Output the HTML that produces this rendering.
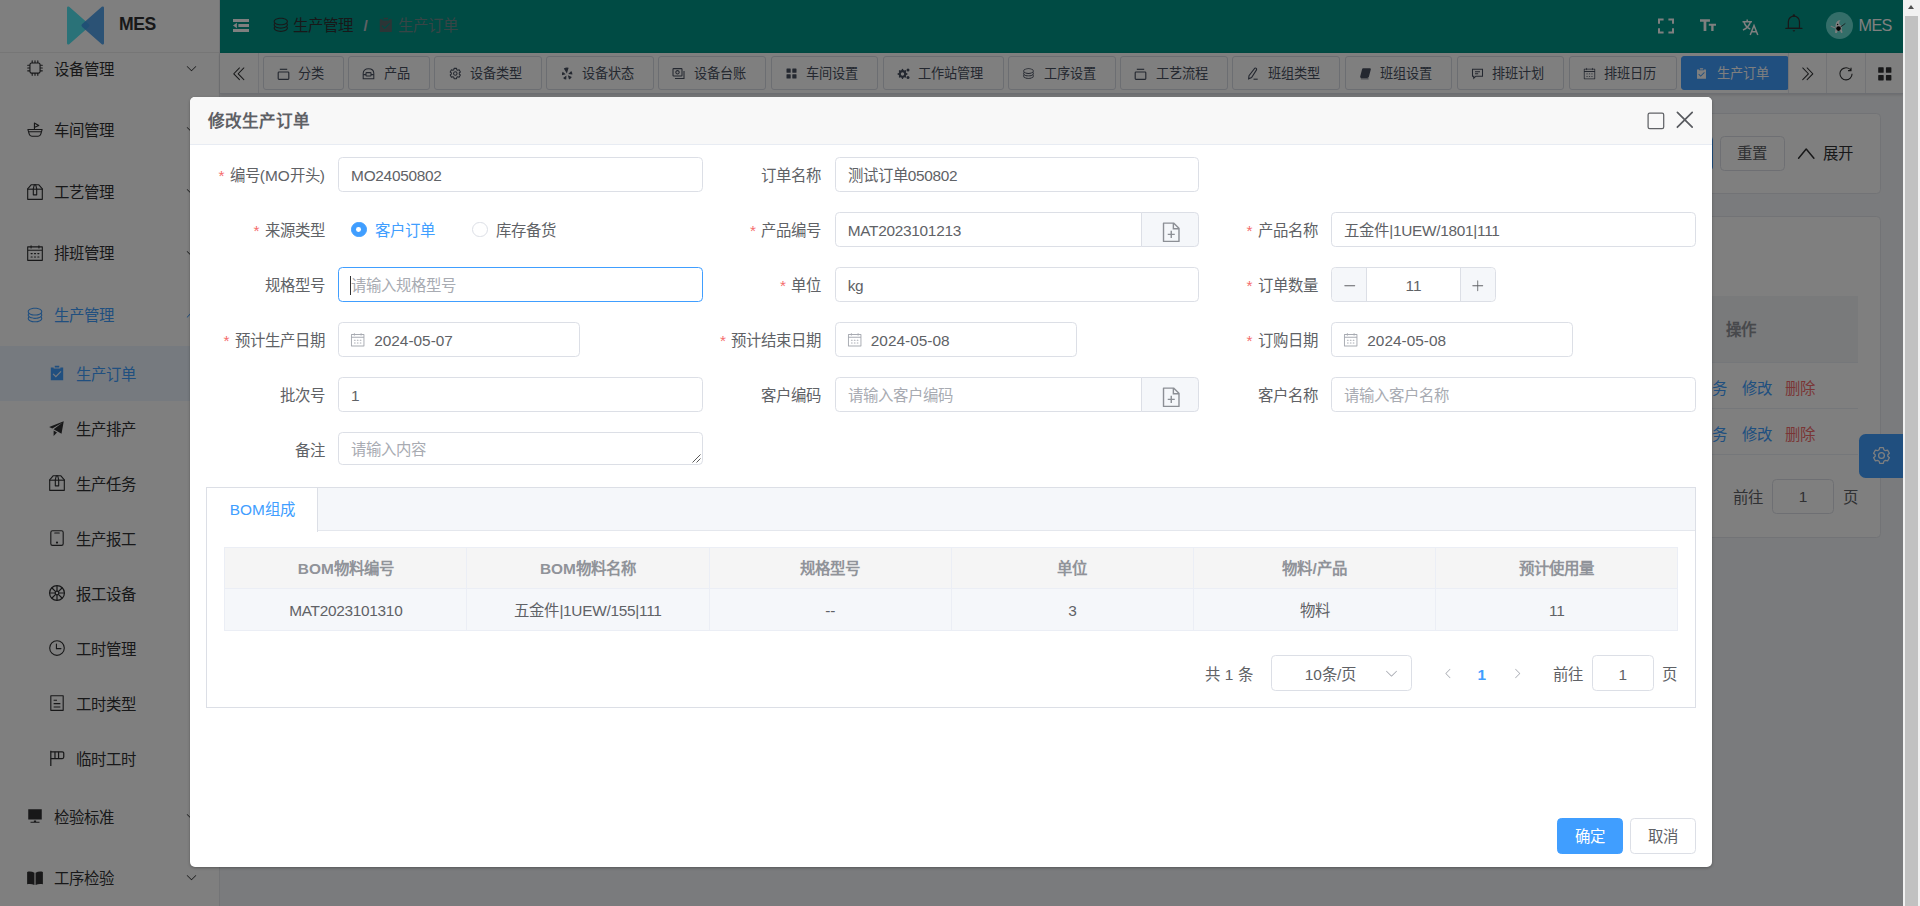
<!DOCTYPE html>
<html lang="zh-CN">
<head>
<meta charset="utf-8">
<title>MES</title>
<style>
*{box-sizing:border-box;}
html,body{margin:0;padding:0;}
body{width:1920px;height:906px;overflow:hidden;position:relative;background:#f5f7fa;font-family:"Liberation Sans",sans-serif;font-size:15.4px;color:#303133;}
svg{display:block;}
.abs{position:absolute;}
/* ---------- app ---------- */
#app{isolation:isolate;position:absolute;left:0;top:0;width:1903px;height:906px;overflow:hidden;background:#f5f7fa;}
#side{position:absolute;left:0;top:0;width:220px;height:906px;background:#fff;border-right:1px solid #e6e8ec;overflow:hidden;}
#logo{position:absolute;left:0;top:0;width:220px;height:53px;background:#fff;border-bottom:1px solid #ededed;z-index:2;}
#logo .t{position:absolute;left:119px;top:13px;font-size:17.6px;font-weight:bold;color:#303133;line-height:22px;letter-spacing:-0.4px;}
#menu{position:absolute;left:0;top:37.7px;width:219px;}
.mi{position:relative;height:61.6px;line-height:61.6px;font-size:15.4px;color:#303133;white-space:nowrap;}
.mi .ic{position:absolute;left:26.1px;top:21.8px;width:18px;height:18px;}
.mi .tx{position:absolute;left:54.3px;top:1px;}
.mi .ar{position:absolute;left:185px;top:24.2px;width:13px;height:13px;}
.smi{position:relative;height:55px;line-height:55px;font-size:15.4px;color:#303133;white-space:nowrap;}
.smi .ic{position:absolute;left:48px;top:18.5px;width:18px;height:18px;}
.smi .tx{position:absolute;left:76.3px;top:1px;}
.smi.on{background:#ecf5ff;color:#409eff;}
.mi.on{color:#409eff;}
#hdr{position:absolute;left:220px;top:0;width:1683px;height:53px;background:#009688;}
#tags{position:absolute;left:220px;top:53px;width:1683px;height:40.5px;background:#fff;border-bottom:1px solid #d8dce5;box-shadow:0 1px 3px 0 rgba(0,0,0,.12),0 0 3px 0 rgba(0,0,0,.04);}
.tag{position:absolute;top:3px;height:34px;border:1px solid #d8dce5;border-radius:3px;background:#fff;color:#495060;font-size:13.2px;line-height:32px;white-space:nowrap;}
.tag .ic{position:absolute;left:13.2px;top:9.8px;width:13px;height:13px;}
.tag .tx{position:absolute;left:34.7px;top:1px;}
.tag.on{background:#409eff;border-color:#409eff;color:#fff;}
.tbtn{position:absolute;top:0;height:40px;border-left:1px solid #e4e7ed;}
/* ---------- overlay & dialog ---------- */
#ovl{position:absolute;left:0;top:0;width:1903px;height:906px;background:rgba(0,0,0,.5);}
#dlg{position:absolute;left:190px;top:97px;width:1522px;height:770px;background:#fff;border-radius:5px;box-shadow:0 1px 3px rgba(0,0,0,.3);overflow:hidden;color:#606266;}
#dlgh{position:absolute;left:0;top:0;width:1522px;height:48px;background:#f8f8f8;border-bottom:1px solid #e8ecf3;}
#dlgh .t{position:absolute;left:18px;top:12.5px;font-size:16.6px;line-height:24px;font-weight:bold;color:#5e6065;}
/* ---------- scrollbar ---------- */
#sb{position:absolute;left:1903px;top:0;width:17px;height:906px;background:#f1f1f1;}
#sb .th{position:absolute;left:2px;top:16px;width:13px;height:890px;background:#c1c1c1;}
#sb .up{position:absolute;left:4.9px;top:4.6px;width:0;height:0;border-left:3.6px solid transparent;border-right:3.6px solid transparent;border-bottom:4.3px solid #505050;}
.bc{top:0;line-height:51px;font-size:15.4px;white-space:nowrap;}
/* ----- dialog form ----- */
#dlg .lbl{position:absolute;height:35px;line-height:37px;text-align:right;font-size:15.4px;color:#606266;white-space:nowrap;}
#dlg .star{color:#f56c6c;margin-right:5.4px;}
#dlg .inp{position:absolute;height:35px;border:1px solid #dcdfe6;border-radius:4.4px;background:#fff;font-size:15.4px;color:#606266;white-space:nowrap;overflow:hidden;}
#dlg .inp.foc{border-color:#409eff;}
#dlg .inp .v,#dlg .inp .ph{position:absolute;left:12.1px;top:1px;line-height:33px;}
#dlg .lat{letter-spacing:-0.28px;}
#dlg .inp .ph{color:#a8abb2;}
#dlg .inp .cur{position:absolute;left:10.8px;top:8px;width:1px;height:19px;background:#303133;}
#dlg .inp .dic{position:absolute;left:11px;top:8.8px;}
#dlg .app{position:absolute;height:35px;border:1px solid #dcdfe6;border-radius:0 4.4px 4.4px 0;background:#f5f7fa;}
#dlg .nbtn{position:absolute;width:35.2px;height:33px;background:#f5f7fa;}
#dlg .radio{position:absolute;width:15.4px;height:15.4px;border:1px solid #dcdfe6;border-radius:50%;background:#fff;}
#dlg .radio.on{border-color:#409eff;background:#409eff;}
#dlg .radio.on:after{content:"";position:absolute;left:4.3px;top:4.3px;width:4.8px;height:4.8px;border-radius:50%;background:#fff;}
#dlg .rtx{position:absolute;line-height:37px;font-size:15.4px;color:#606266;white-space:nowrap;}
#dlg .tabs{position:absolute;border:1px solid #dcdfe6;background:#fff;}
#dlg .tabh{position:absolute;left:0;top:0;right:0;height:43px;background:#f5f7fa;border-bottom:1px solid #e4e7ed;}
#dlg .tabi{position:absolute;left:-1px;top:-1px;width:112px;height:45px;background:#fff;border:1px solid #dcdfe6;border-bottom:0;border-top-color:#dcdfe6;color:#409eff;font-size:15.4px;line-height:44px;text-align:center;}
#dlg .tbl{position:absolute;height:84px;border-left:1px solid #ebeef5;border-top:1px solid #ebeef5;}
#dlg .th,#dlg .td{position:absolute;border-right:1px solid #ebeef5;border-bottom:1px solid #ebeef5;text-align:center;font-size:15.4px;white-space:nowrap;}
#dlg .th{top:0;height:41px;line-height:42.6px;background:#f5f5f5;color:#909399;font-weight:bold;}
#dlg .td{top:41px;height:42px;line-height:43.6px;background:#f5f7fa;color:#606266;}
#dlg .ptx{position:absolute;height:35.2px;line-height:39.6px;font-size:15.4px;color:#606266;white-space:nowrap;}
#dlg .btn{position:absolute;width:66px;height:36px;border:1px solid #dcdfe6;border-radius:4.4px;background:#fff;color:#606266;font-size:15.4px;line-height:36.6px;text-align:center;}
#dlg .btn.pri{background:#409eff;border-color:#409eff;color:#fff;}
#main{position:absolute;left:0;top:0;width:1903px;height:906px;}
#main .card{position:absolute;background:#fff;border:1px solid #e4e7ed;border-radius:4.4px;}
#main .lnk{line-height:47px;font-size:15.4px;color:#409eff;white-space:nowrap;}
</style>
</head>
<body>
<div id="app">
  <div id="side">
    <div id="menu"><div class="mi"><div class="ic"><svg viewBox="0 0 1024 1024" width="18" height="18" style=""><path fill="currentColor" d="M320 256a64 64 0 0 0-64 64v384a64 64 0 0 0 64 64h384a64 64 0 0 0 64-64V320a64 64 0 0 0-64-64zm0-64h384a128 128 0 0 1 128 128v384a128 128 0 0 1-128 128H320a128 128 0 0 1-128-128V320a128 128 0 0 1 128-128"/><path fill="currentColor" d="M512 64a32 32 0 0 1 32 32v128h-64V96a32 32 0 0 1 32-32m160 0a32 32 0 0 1 32 32v128h-64V96a32 32 0 0 1 32-32m-320 0a32 32 0 0 1 32 32v128h-64V96a32 32 0 0 1 32-32m160 896a32 32 0 0 1-32-32V800h64v128a32 32 0 0 1-32 32m160 0a32 32 0 0 1-32-32V800h64v128a32 32 0 0 1-32 32m-320 0a32 32 0 0 1-32-32V800h64v128a32 32 0 0 1-32 32M64 512a32 32 0 0 1 32-32h128v64H96a32 32 0 0 1-32-32m0-160a32 32 0 0 1 32-32h128v64H96a32 32 0 0 1-32-32m0 320a32 32 0 0 1 32-32h128v64H96a32 32 0 0 1-32-32m896-160a32 32 0 0 1-32 32H800v-64h128a32 32 0 0 1 32 32m0-160a32 32 0 0 1-32 32H800v-64h128a32 32 0 0 1 32 32m0 320a32 32 0 0 1-32 32H800v-64h128a32 32 0 0 1 32 32"/></svg></div><div class="tx">设备管理</div><div class="ar"><svg viewBox="0 0 1024 1024" width="13" height="13" style=""><path fill="currentColor" d="M831.872 340.864 512 652.672 192.128 340.864a30.592 30.592 0 0 0-42.752 0 29.12 29.12 0 0 0 0 41.6L489.664 714.24a32 32 0 0 0 44.672 0l340.288-331.712a29.12 29.12 0 0 0 0-41.728 30.592 30.592 0 0 0-42.752 0z"/></svg></div></div><div class="mi"><div class="ic"><svg viewBox="0 0 1024 1024" width="18" height="18" style=""><path fill="currentColor" d="M512 386.88V448h405.568a32 32 0 0 1 30.72 40.768l-76.48 267.968A192 192 0 0 1 687.168 896H336.832a192 192 0 0 1-184.64-139.264L75.648 488.768A32 32 0 0 1 106.368 448H448V117.888a32 32 0 0 1 47.36-28.096l13.888 7.616L512 96v2.88l231.68 126.4a32 32 0 0 1-2.048 57.216zm0-70.272 144.768-65.792L512 171.84zM512 512H148.864l18.24 64H856.96l18.24-64zM185.408 640l28.352 99.2A128 128 0 0 0 336.832 832h350.336a128 128 0 0 0 123.072-92.8l28.352-99.2H185.408"/></svg></div><div class="tx">车间管理</div><div class="ar"><svg viewBox="0 0 1024 1024" width="13" height="13" style=""><path fill="currentColor" d="M831.872 340.864 512 652.672 192.128 340.864a30.592 30.592 0 0 0-42.752 0 29.12 29.12 0 0 0 0 41.6L489.664 714.24a32 32 0 0 0 44.672 0l340.288-331.712a29.12 29.12 0 0 0 0-41.728 30.592 30.592 0 0 0-42.752 0z"/></svg></div></div><div class="mi"><div class="ic"><svg viewBox="0 0 1024 1024" width="18" height="18" style=""><path fill="currentColor" d="M317.056 128 128 344.064V896h768V344.064L706.944 128zm-14.528-64h418.944a32 32 0 0 1 24.064 10.88l206.528 236.096A32 32 0 0 1 960 332.032V928a32 32 0 0 1-32 32H96a32 32 0 0 1-32-32V332.032a32 32 0 0 1 7.936-21.12L278.4 75.008A32 32 0 0 1 302.528 64"/><path fill="currentColor" d="M64 320h896v64H64z"/><path fill="currentColor" d="M448 327.872V640h128V327.872L526.08 128h-28.16zM448 64h128l64 256v352a32 32 0 0 1-32 32H416a32 32 0 0 1-32-32V320z"/></svg></div><div class="tx">工艺管理</div><div class="ar"><svg viewBox="0 0 1024 1024" width="13" height="13" style=""><path fill="currentColor" d="M831.872 340.864 512 652.672 192.128 340.864a30.592 30.592 0 0 0-42.752 0 29.12 29.12 0 0 0 0 41.6L489.664 714.24a32 32 0 0 0 44.672 0l340.288-331.712a29.12 29.12 0 0 0 0-41.728 30.592 30.592 0 0 0-42.752 0z"/></svg></div></div><div class="mi"><div class="ic"><svg viewBox="0 0 1024 1024" width="18" height="18" style=""><path fill="currentColor" d="M128 384v512h768V192H768v32a32 32 0 1 1-64 0v-32H320v32a32 32 0 0 1-64 0v-32H128v128h768v64zm192-256h384V96a32 32 0 1 1 64 0v32h160a32 32 0 0 1 32 32v768a32 32 0 0 1-32 32H96a32 32 0 0 1-32-32V160a32 32 0 0 1 32-32h160V96a32 32 0 0 1 64 0zm-32 384h64a32 32 0 0 1 0 64h-64a32 32 0 0 1 0-64m0 192h64a32 32 0 1 1 0 64h-64a32 32 0 1 1 0-64m192-192h64a32 32 0 0 1 0 64h-64a32 32 0 0 1 0-64m0 192h64a32 32 0 1 1 0 64h-64a32 32 0 1 1 0-64m192-192h64a32 32 0 1 1 0 64h-64a32 32 0 1 1 0-64m0 192h64a32 32 0 1 1 0 64h-64a32 32 0 1 1 0-64"/></svg></div><div class="tx">排班管理</div><div class="ar"><svg viewBox="0 0 1024 1024" width="13" height="13" style=""><path fill="currentColor" d="M831.872 340.864 512 652.672 192.128 340.864a30.592 30.592 0 0 0-42.752 0 29.12 29.12 0 0 0 0 41.6L489.664 714.24a32 32 0 0 0 44.672 0l340.288-331.712a29.12 29.12 0 0 0 0-41.728 30.592 30.592 0 0 0-42.752 0z"/></svg></div></div><div class="mi on"><div class="ic"><svg viewBox="0 0 1024 1024" width="18" height="18" style=""><path fill="currentColor" d="m161.92 580.736 29.888 58.88C171.328 659.776 160 681.728 160 704c0 82.304 155.328 160 352 160s352-77.696 352-160c0-22.272-11.392-44.16-31.808-64.32l30.464-58.432C903.936 615.808 928 657.664 928 704c0 129.728-188.544 224-416 224S96 833.728 96 704c0-46.592 24.32-88.576 65.92-123.264"/><path fill="currentColor" d="m161.92 388.736 29.888 58.88C171.328 467.84 160 489.792 160 512c0 82.304 155.328 160 352 160s352-77.696 352-160c0-22.272-11.392-44.16-31.808-64.32l30.464-58.432C903.936 423.808 928 465.664 928 512c0 129.728-188.544 224-416 224S96 641.728 96 512c0-46.592 24.32-88.576 65.92-123.264"/><path fill="currentColor" d="M512 544c-227.456 0-416-94.272-416-224S284.544 96 512 96s416 94.272 416 224-188.544 224-416 224m0-64c196.672 0 352-77.696 352-160S708.672 160 512 160s-352 77.696-352 160 155.328 160 352 160"/></svg></div><div class="tx">生产管理</div><div class="ar"><svg viewBox="0 0 1024 1024" width="13" height="13" style=""><path fill="currentColor" d="m488.832 344.32-339.84 356.672a32 32 0 0 0 0 44.16l.384.384a29.44 29.44 0 0 0 42.688 0l320-335.872 319.872 335.872a29.44 29.44 0 0 0 42.688 0l.384-.384a32 32 0 0 0 0-44.16L535.168 344.32a32 32 0 0 0-46.336 0"/></svg></div></div><div class="smi on"><div class="ic"><svg viewBox="0 0 1024 1024" width="18" height="18" style=""><path fill="currentColor" d="M704 192h160v736H160V192h160.064v64H704zM311.616 537.28l-45.312 45.248L447.36 763.52l316.8-316.8-45.312-45.184L447.36 673.024zM384 192V96h256v96z"/></svg></div><div class="tx">生产订单</div></div><div class="smi"><div class="ic"><svg viewBox="0 0 1024 1024" width="18" height="18" style=""><path fill="currentColor" d="m64 448 832-320-128 704-446.08-243.328L832 192 242.816 545.472zm256 512V657.024L512 768z"/></svg></div><div class="tx">生产排产</div></div><div class="smi"><div class="ic"><svg viewBox="0 0 1024 1024" width="18" height="18" style=""><path fill="currentColor" d="M317.056 128 128 344.064V896h768V344.064L706.944 128zm-14.528-64h418.944a32 32 0 0 1 24.064 10.88l206.528 236.096A32 32 0 0 1 960 332.032V928a32 32 0 0 1-32 32H96a32 32 0 0 1-32-32V332.032a32 32 0 0 1 7.936-21.12L278.4 75.008A32 32 0 0 1 302.528 64"/><path fill="currentColor" d="M64 320h896v64H64z"/><path fill="currentColor" d="M448 327.872V640h128V327.872L526.08 128h-28.16zM448 64h128l64 256v352a32 32 0 0 1-32 32H416a32 32 0 0 1-32-32V320z"/></svg></div><div class="tx">生产任务</div></div><div class="smi"><div class="ic"><svg viewBox="0 0 1024 1024" width="18" height="18" style=""><path fill="currentColor" d="M256 128a64 64 0 0 0-64 64v640a64 64 0 0 0 64 64h512a64 64 0 0 0 64-64V192a64 64 0 0 0-64-64zm0-64h512a128 128 0 0 1 128 128v640a128 128 0 0 1-128 128H256a128 128 0 0 1-128-128V192A128 128 0 0 1 256 64m128 128h256a32 32 0 1 1 0 64H384a32 32 0 0 1 0-64m128 640a64 64 0 1 1 0-128 64 64 0 0 1 0 128"/></svg></div><div class="tx">生产报工</div></div><div class="smi"><div class="ic"><svg viewBox="0 0 16 16" width="18" height="18" style=""><g fill="none" stroke="currentColor" stroke-width="1.1"><circle cx="8" cy="8" r="6.6"/><circle cx="8" cy="8" r="1.6"/><path d="M8 1.4v5M8 9.6v5M1.4 8h5M9.6 8h5M3.3 3.3l3.5 3.5M9.2 9.2l3.5 3.5M12.7 3.3 9.2 6.8M6.8 9.2l-3.5 3.5"/></g></svg></div><div class="tx">报工设备</div></div><div class="smi"><div class="ic"><svg viewBox="0 0 1024 1024" width="18" height="18" style=""><path fill="currentColor" d="M512 896a384 384 0 1 0 0-768 384 384 0 0 0 0 768m0 64a448 448 0 1 1 0-896 448 448 0 0 1 0 896"/><path fill="currentColor" d="M480 256a32 32 0 0 1 32 32v256a32 32 0 0 1-64 0V288a32 32 0 0 1 32-32"/><path fill="currentColor" d="M480 512h256q32 0 32 32t-32 32H480q-32 0-32-32t32-32"/></svg></div><div class="tx">工时管理</div></div><div class="smi"><div class="ic"><svg viewBox="0 0 1024 1024" width="18" height="18" style=""><path fill="currentColor" d="M192 128v768h640V128zm-32-64h704a32 32 0 0 1 32 32v832a32 32 0 0 1-32 32H160a32 32 0 0 1-32-32V96a32 32 0 0 1 32-32m160 448h384v64H320zm0-192h192v64H320zm0 384h384v64H320z"/></svg></div><div class="tx">工时类型</div></div><div class="smi"><div class="ic"><svg viewBox="0 0 16 16" width="18" height="18" style=""><g fill="none" stroke="currentColor" stroke-width="1.1"><path d="M2.5 1.5v13.5"/><path d="M2.5 2.5h10.2a1.3 1.3 0 0 1 1.3 1.3v3.4a1.3 1.3 0 0 1-1.3 1.3H2.5"/><path d="M6.2 2.5v6M9.4 2.5v6"/></g></svg></div><div class="tx">临时工时</div></div><div class="mi"><div class="ic"><svg viewBox="0 0 1024 1024" width="18" height="18" style=""><path fill="currentColor" d="M448 832v-64h128v64h192v64H256v-64zM128 704V128h768v576z"/></svg></div><div class="tx">检验标准</div><div class="ar"><svg viewBox="0 0 1024 1024" width="13" height="13" style=""><path fill="currentColor" d="M831.872 340.864 512 652.672 192.128 340.864a30.592 30.592 0 0 0-42.752 0 29.12 29.12 0 0 0 0 41.6L489.664 714.24a32 32 0 0 0 44.672 0l340.288-331.712a29.12 29.12 0 0 0 0-41.728 30.592 30.592 0 0 0-42.752 0z"/></svg></div></div><div class="mi"><div class="ic"><svg viewBox="0 0 16 16" width="18" height="18" style=""><path fill="currentColor" d="M1 2.6C3 1.9 5.4 2.1 7.5 3.3v11C5.4 13.2 3 13 1 13.6zM15 2.6C13 1.9 10.6 2.1 8.5 3.3v11c2.100-1.100 4.500-1.300 6.500-.7z"/></svg></div><div class="tx">工序检验</div><div class="ar"><svg viewBox="0 0 1024 1024" width="13" height="13" style=""><path fill="currentColor" d="M831.872 340.864 512 652.672 192.128 340.864a30.592 30.592 0 0 0-42.752 0 29.12 29.12 0 0 0 0 41.6L489.664 714.24a32 32 0 0 0 44.672 0l340.288-331.712a29.12 29.12 0 0 0 0-41.728 30.592 30.592 0 0 0-42.752 0z"/></svg></div></div></div>
    <div id="logo"><svg class="abs" style="left:67px;top:6px" width="37" height="39" viewBox="0 0 37 39"><path d="M2.2 0.8 L21.5 17.8 a2.2 2.2 0 0 1 0 3.4 L2.2 38.2 a1.3 1.3 0 0 1-2.2-1 V1.800 a1.3 1.3 0 0 1 2.2-1z" fill="#55e4f0"/><path d="M34.8 0.8 L15.5 17.8 a2.2 2.2 0 0 0 0 3.4 L34.8 38.2 a1.3 1.3 0 0 0 2.2-1 V1.800 a1.3 1.3 0 0 0-2.2-1z" fill="#3f97e8" fill-opacity="0.88"/></svg><div class="t">MES</div></div>
  </div>
  <div id="hdr"><div class="abs" style="left:13px;top:19px"><svg viewBox="0 0 16 13" width="16" height="13"><g fill="#fff"><rect x="0" y="0" width="16" height="3"/><rect x="5.400" y="5" width="10.600" height="3"/><rect x="0" y="10" width="16" height="3"/><path d="M0 6.500l3.900-2.700v5.400z"/></g></svg></div><div class="abs" style="left:51.900px;top:16.200px;color:#303133"><svg viewBox="0 0 1024 1024" width="17.6" height="17.6" style=""><path fill="currentColor" d="m161.92 580.736 29.888 58.88C171.328 659.776 160 681.728 160 704c0 82.304 155.328 160 352 160s352-77.696 352-160c0-22.272-11.392-44.16-31.808-64.32l30.464-58.432C903.936 615.808 928 657.664 928 704c0 129.728-188.544 224-416 224S96 833.728 96 704c0-46.592 24.32-88.576 65.92-123.264"/><path fill="currentColor" d="m161.92 388.736 29.888 58.88C171.328 467.84 160 489.792 160 512c0 82.304 155.328 160 352 160s352-77.696 352-160c0-22.272-11.392-44.16-31.808-64.32l30.464-58.432C903.936 423.808 928 465.664 928 512c0 129.728-188.544 224-416 224S96 641.728 96 512c0-46.592 24.32-88.576 65.92-123.264"/><path fill="currentColor" d="M512 544c-227.456 0-416-94.272-416-224S284.544 96 512 96s416 94.272 416 224-188.544 224-416 224m0-64c196.672 0 352-77.696 352-160S708.672 160 512 160s-352 77.696-352 160 155.328 160 352 160"/></svg></div><div class="abs bc" style="left:72.500px;color:#303133">生产管理</div><div class="abs bc" style="left:143.5px;color:#c0c4cc;font-weight:bold">/</div><div class="abs" style="left:157px;top:16px;color:#566a6c"><svg viewBox="0 0 1024 1024" width="17.6" height="17.6" style=""><path fill="currentColor" d="M704 192h160v736H160V192h160.064v64H704zM311.616 537.28l-45.312 45.248L447.36 763.52l316.8-316.8-45.312-45.184L447.36 673.024zM384 192V96h256v96z"/></svg></div><div class="abs bc" style="left:177.500px;color:#6f8a8c">生产订单</div><div class="abs" style="left:1438px;top:17.500px"><svg viewBox="0 0 16 15" width="16" height="16" style=""><g fill="none" stroke="#fff" stroke-width="2"><path d="M1 5.200V1h4.600M10.400 1H15v4.200M15 9.800V14h-4.600M5.600 14H1V9.800"/></g></svg></div><div class="abs" style="left:1479.500px;top:17.200px"><svg viewBox="0 0 17 12.500" width="16.6" height="16.6" style=""><g fill="#fff"><path d="M0 0h10.200v2.500H6.500V12H3.700V2.500H0z"/><path d="M9 4.600h7.400v2.100H13.900V12h-2.400V6.700H9z"/></g></svg></div><div class="abs" style="left:1521.5px;top:18.5px"><svg viewBox="0 0 17 16.500" width="17" height="17" style=""><g fill="none" stroke="#fff" stroke-width="1.500"><path d="M0.500 2.500h9.500M5.200 0.300v2.200M2 2.700c1 3.300 3.300 5.800 6.300 7.200M8.400 2.700C7.400 6 4.800 9 1 10.800"/><path d="M8.200 15.700l3.800-9.400 3.800 9.400M9.600 12.600h4.800"/></g></svg></div><div class="abs" style="left:1564.300px;top:13.100px;color:#303133"><svg viewBox="0 0 1024 1024" width="19.8" height="19.8" style=""><path fill="currentColor" d="M512 64a64 64 0 0 1 64 64v64H448v-64a64 64 0 0 1 64-64"/><path fill="currentColor" d="M256 768h512V448a256 256 0 1 0-512 0zm256-640a320 320 0 0 1 320 320v384H192V448a320 320 0 0 1 320-320"/><path fill="currentColor" d="M96 768h832q32 0 32 32t-32 32H96q-32 0-32-32t32-32m352 128h128a64 64 0 0 1-128 0"/></svg></div><div class="abs" style="left:1606px;top:12px;width:27px;height:27px;border-radius:50%;background:#68dcd3;overflow:hidden"><svg width="27" height="27" viewBox="0 0 27 27"><path d="M14.600 8.300c-2.600-.3-4.600 1.700-5 4.400-.2 1.300-.1 2.300.2 3.300l-.9 4.800 1.900.300.900-2.200 2.500.2 1 2 1.400-.500-1-3.300c.5-1.400.300-3-.7-3.700-1.100-.8-1.800-1.500-1.700-2.800.1-1.100.6-1.900 1.400-2.500z" fill="#fff"/><path d="M5.200 14.200l3.400 1.600" stroke="#f4f4f4" stroke-width="1.100" stroke-linecap="round"/><circle cx="12.500" cy="16.600" r="2.300" fill="#050505"/><circle cx="11.600" cy="12.500" r=".7" fill="#111"/><path d="M14.700 14.900l4.300-3.200" stroke="#2a2a2a" stroke-width=".8" stroke-linecap="round"/></svg></div><div class="abs" style="left:1638.600px;top:0;line-height:51px;font-size:16.200px;letter-spacing:-0.700px;color:#fff">MES</div></div>
  <div id="tags"><div class="tbtn" style="left:0;width:38.500px;border-left:0;border-right:1px solid #e4e7ed"><div class="abs" style="left:10.200px;top:11.700px;color:#303133"><svg viewBox="0 0 1024 1024" width="17.6" height="17.6" style=""><path fill="currentColor" d="M529.408 149.376a29.12 29.12 0 0 1 41.728 0 30.592 30.592 0 0 1 0 42.688L259.264 511.936l311.872 319.936a30.592 30.592 0 0 1-.512 43.264 29.12 29.12 0 0 1-41.216-.512L197.76 534.272a32 32 0 0 1 0-44.672l331.648-340.224zm256 0a29.12 29.12 0 0 1 41.728 0 30.592 30.592 0 0 1 0 42.688L515.264 511.936l311.872 319.936a30.592 30.592 0 0 1-.512 43.264 29.12 29.12 0 0 1-41.216-.512L453.76 534.272a32 32 0 0 1 0-44.672l331.648-340.224z"/></svg></div></div><div class="tag" style="left:42.5px;width:81.4px"><div class="ic"><svg viewBox="0 0 13 13" width="13" height="13" style=""><g fill="none" stroke="currentColor" stroke-width="1.150"><rect x="1.200" y="5" width="10.600" height="7.300" rx=".8"/><path d="M2.800 2.300h7.400"/></g></svg></div><div class="tx">分类</div></div><div class="tag" style="left:128.3px;width:81.4px"><div class="ic"><svg viewBox="0 0 13 13" width="13" height="13" style=""><g fill="none" stroke="currentColor" stroke-width="1.050"><path d="M1.200 11.800V6.200c0-2.600 1.800-4.400 5.300-4.400s5.300 1.800 5.300 4.400v5.600z"/><rect x="4" y="5.600" width="5" height="3.400" rx=".6"/><path d="M1.200 7.600H4M9 7.600h2.800"/></g></svg></div><div class="tx">产品</div></div><div class="tag" style="left:214.0px;width:107.8px"><div class="ic"><svg viewBox="0 0 13 13" width="13" height="13" style=""><g fill="none" stroke="currentColor" stroke-width="1.050" stroke-linejoin="round"><circle cx="7.300" cy="6.500" r="1.750"/><path d="M5.79 2.80L6.06 1.35L8.54 1.35L8.81 2.80L9.75 3.34L11.14 2.85L12.38 5.00L11.26 5.96L11.26 7.04L12.38 8.00L11.14 10.15L9.75 9.66L8.81 10.20L8.54 11.65L6.06 11.65L5.79 10.20L4.85 9.66L3.46 10.15L2.22 8.00L3.34 7.04L3.34 5.96L2.22 5.00L3.46 2.85L4.85 3.34z"/></g></svg></div><div class="tx">设备类型</div></div><div class="tag" style="left:326.2px;width:107.8px"><div class="ic"><svg viewBox="-0.700 0 13 14" width="13.6" height="13.6" style=""><path fill="currentColor" d="M5.89 6.71L2.71 1.42A7.00 7.00 0 0 1 7.69 0.81zM7.24 7.20L10.41 4.15A5.60 5.60 0 0 1 11.60 7.80zM6.87 8.57L10.94 10.23A5.60 5.60 0 0 1 8.10 12.79zM5.39 8.75L5.25 12.95A5.40 5.40 0 0 1 1.99 11.21zM4.72 7.37L0.88 8.50A5.20 5.20 0 0 1 1.50 5.00z"/></svg></div><div class="tx">设备状态</div></div><div class="tag" style="left:438.3px;width:107.8px"><div class="ic"><svg viewBox="0 0 13 13" width="13" height="13" style=""><g fill="none" stroke="currentColor" stroke-width="1.050"><rect x="1" y="1.600" width="9" height="7.400" rx=".6"/><path d="M3 11.400h9V4"/><circle cx="5.500" cy="5.300" r="1.700"/></g></svg></div><div class="tx">设备台账</div></div><div class="tag" style="left:550.5px;width:107.8px"><div class="ic"><svg viewBox="0 0 13 13" width="13" height="13" style=""><g fill="currentColor"><rect x="1.500" y="1.500" width="4.200" height="4.200" rx=".5"/><rect x="7.300" y="1.500" width="4.200" height="4.200" rx=".5"/><rect x="1.500" y="7.300" width="4.200" height="4.200" rx=".5"/><rect x="7.300" y="7.300" width="4.200" height="4.200" rx=".5"/></g></svg></div><div class="tx">车间设置</div></div><div class="tag" style="left:662.7px;width:121.0px"><div class="ic"><svg viewBox="0 0 13 13" width="13" height="13" style=""><g fill="currentColor"><path d="M5 1.800l1 .1.400 1.200 1 .5 1.100-.5.800.8-.5 1.100.5 1 1.200.4v1.100l-1.200.4-.5 1 .5 1.100-.8.800-1.100-.5-1 .5-.4 1.200H5l-.4-1.200-1-.5-1.100.5-.8-.8.500-1.100-.5-1L.5 7.500V6.400L1.700 6l.5-1-.5-1.100.8-.8 1.100.5 1-.5zM5.500 5.300a1.700 1.700 0 1 0 0 3.400 1.700 1.700 0 0 0 0-3.400z"/><circle cx="11" cy="3" r="1.500"/><circle cx="11" cy="10.500" r="1.500"/></g></svg></div><div class="tx">工作站管理</div></div><div class="tag" style="left:788.0px;width:107.8px"><div class="ic"><svg viewBox="0 0 1024 1024" width="13" height="13" style=""><path fill="currentColor" d="m161.92 580.736 29.888 58.88C171.328 659.776 160 681.728 160 704c0 82.304 155.328 160 352 160s352-77.696 352-160c0-22.272-11.392-44.16-31.808-64.32l30.464-58.432C903.936 615.808 928 657.664 928 704c0 129.728-188.544 224-416 224S96 833.728 96 704c0-46.592 24.32-88.576 65.92-123.264"/><path fill="currentColor" d="m161.92 388.736 29.888 58.88C171.328 467.84 160 489.792 160 512c0 82.304 155.328 160 352 160s352-77.696 352-160c0-22.272-11.392-44.16-31.808-64.32l30.464-58.432C903.936 423.808 928 465.664 928 512c0 129.728-188.544 224-416 224S96 641.728 96 512c0-46.592 24.32-88.576 65.92-123.264"/><path fill="currentColor" d="M512 544c-227.456 0-416-94.272-416-224S284.544 96 512 96s416 94.272 416 224-188.544 224-416 224m0-64c196.672 0 352-77.696 352-160S708.672 160 512 160s-352 77.696-352 160 155.328 160 352 160"/></svg></div><div class="tx">工序设置</div></div><div class="tag" style="left:900.2px;width:107.8px"><div class="ic"><svg viewBox="0 0 13 13" width="13" height="13" style=""><g fill="none" stroke="currentColor" stroke-width="1.150"><rect x="1.200" y="5" width="10.600" height="7.300" rx=".8"/><path d="M2.800 2.300h7.400"/></g></svg></div><div class="tx">工艺流程</div></div><div class="tag" style="left:1012.3px;width:107.8px"><div class="ic"><svg viewBox="0 0 13 13" width="13" height="13" style=""><g fill="none" stroke="currentColor" stroke-width="1.100"><path d="M8.800 1.200c1-.6 2.300.6 1.700 1.700L5.600 10.600l-3 1.200.4-3.100z"/><path d="M7.500 12.200h4.200"/></g></svg></div><div class="tx">班组类型</div></div><div class="tag" style="left:1124.5px;width:107.8px"><div class="ic"><svg viewBox="0 0 13 13" width="13" height="13" style=""><g fill="currentColor"><path d="M4.300 1.300h6.500c.8 0 1.200.6 1 1.300L9.900 9.800c-.2.700-.9 1.100-1.600 1.100H2.200c-.8 0-1.200-.6-1-1.300L3 2.500c.2-.7.700-1.200 1.300-1.200z"/><path d="M1.800 11.400h7.600l.3.900H2.600c-.6 0-.9-.4-.8-.9z"/></g></svg></div><div class="tx">班组设置</div></div><div class="tag" style="left:1236.7px;width:107.8px"><div class="ic"><svg viewBox="0 0 13 13" width="13" height="13" style=""><g fill="none" stroke="currentColor" stroke-width="1.050"><path d="M1.500 2.200h10v7h-6.600L2.800 11.300V9.200H1.500z"/><path d="M4 4.700h5M4 6.700h3.200"/></g></svg></div><div class="tx">排班计划</div></div><div class="tag" style="left:1348.8px;width:107.8px"><div class="ic"><svg viewBox="0 0 1024 1024" width="13" height="13" style=""><path fill="currentColor" d="M128 384v512h768V192H768v32a32 32 0 1 1-64 0v-32H320v32a32 32 0 0 1-64 0v-32H128v128h768v64zm192-256h384V96a32 32 0 1 1 64 0v32h160a32 32 0 0 1 32 32v768a32 32 0 0 1-32 32H96a32 32 0 0 1-32-32V160a32 32 0 0 1 32-32h160V96a32 32 0 0 1 64 0zm-32 384h64a32 32 0 0 1 0 64h-64a32 32 0 0 1 0-64m0 192h64a32 32 0 1 1 0 64h-64a32 32 0 1 1 0-64m192-192h64a32 32 0 0 1 0 64h-64a32 32 0 0 1 0-64m0 192h64a32 32 0 1 1 0 64h-64a32 32 0 1 1 0-64m192-192h64a32 32 0 1 1 0 64h-64a32 32 0 1 1 0-64m0 192h64a32 32 0 1 1 0 64h-64a32 32 0 1 1 0-64"/></svg></div><div class="tx">排班日历</div></div><div class="tag on" style="left:1461.0px;width:107.8px"><div class="ic"><svg viewBox="0 0 1024 1024" width="13" height="13" style=""><path fill="currentColor" d="M704 192h160v736H160V192h160.064v64H704zM311.616 537.28l-45.312 45.248L447.36 763.52l316.8-316.8-45.312-45.184L447.36 673.024zM384 192V96h256v96z"/></svg></div><div class="tx">生产订单</div></div><div class="tbtn" style="left:1568.200px;width:37.600px"><div class="abs" style="left:9.900px;top:11.700px;color:#303133"><svg viewBox="0 0 1024 1024" width="17.6" height="17.6" style=""><path fill="currentColor" d="M452.864 149.312a29.12 29.12 0 0 1 41.728.064L826.24 489.664a32 32 0 0 1 0 44.672L494.592 874.624a29.12 29.12 0 0 1-41.728 0 30.592 30.592 0 0 1 0-42.752L764.736 512 452.864 192a30.592 30.592 0 0 1 0-42.688m-256 0a29.12 29.12 0 0 1 41.728.064L570.24 489.664a32 32 0 0 1 0 44.672L238.592 874.624a29.12 29.12 0 0 1-41.728 0 30.592 30.592 0 0 1 0-42.752L508.736 512 196.864 192a30.592 30.592 0 0 1 0-42.688z"/></svg></div></div><div class="tbtn" style="left:1605.800px;width:39.200px"><div class="abs" style="left:10.400px;top:11.500px;color:#303133"><svg viewBox="0 0 1024 1024" width="17.6" height="17.6" style=""><path fill="currentColor" d="M784.512 230.272v-50.56a32 32 0 1 1 64 0v149.056a32 32 0 0 1-32 32H667.52a32 32 0 1 1 0-64h92.992A320 320 0 1 0 524.8 833.152a320 320 0 0 0 320-320h64a384 384 0 0 1-384 384 384 384 0 0 1-384-384 384 384 0 0 1 643.712-282.88z"/></svg></div></div><div class="tbtn" style="left:1645px;width:38px"><div class="abs" style="left:10.200px;top:11.900px;color:#303133"><svg viewBox="0 0 1024 1024" width="17.6" height="17.6" style=""><path fill="currentColor" d="M160 448a32 32 0 0 1-32-32V160.064a32 32 0 0 1 32-32h256a32 32 0 0 1 32 32V416a32 32 0 0 1-32 32zm448 0a32 32 0 0 1-32-32V160.064a32 32 0 0 1 32-32h255.936a32 32 0 0 1 32 32V416a32 32 0 0 1-32 32zM160 896a32 32 0 0 1-32-32V608a32 32 0 0 1 32-32h256a32 32 0 0 1 32 32v256a32 32 0 0 1-32 32zm448 0a32 32 0 0 1-32-32V608a32 32 0 0 1 32-32h255.936a32 32 0 0 1 32 32v256a32 32 0 0 1-32 32z"/></svg></div></div></div>
  <div id="main"><div class="card" style="left:242px;top:113px;width:1639px;height:80.600px">
  <div class="abs" style="left:1403px;top:22px;width:66.600px;height:35px;border-radius:4.400px;background:#409eff"></div>
  <div class="abs" style="left:1476.500px;top:22px;width:65.200px;height:35px;border:1px solid #dcdfe6;border-radius:4.400px;background:#fff;color:#606266;text-align:center;line-height:34.600px;font-size:15.400px">重置</div>
  <svg class="abs" style="left:1554px;top:33px" width="19" height="13" viewBox="0 0 19 13"><path d="M1.600 11.200 9.200 2 16.900 11.200" fill="none" stroke="#303133" stroke-width="1.500" stroke-linecap="round" stroke-linejoin="round"/></svg>
  <div class="abs" style="left:1580.400px;top:22px;line-height:36.600px;font-size:15.400px;color:#303133">展开</div>
</div>
<div class="card" style="left:242px;top:216px;width:1639px;height:321.600px">
  <div class="abs" style="left:22px;top:79px;width:1592.800px;height:66.600px;background:#f3f4f6;border-bottom:1px solid #ebeef5"></div>
  <div class="abs" style="left:1483px;top:79px;line-height:68.600px;font-size:15.400px;font-weight:bold;color:#909399">操作</div>
  <div class="abs" style="left:22px;top:191.400px;width:1592.800px;height:1px;background:#ebeef5"></div>
  <div class="abs" style="left:22px;top:236.800px;width:1592.800px;height:1px;background:#ebeef5"></div>
  <div class="abs lnk" style="left:1424px;top:148.400px">生成任务</div><div class="abs lnk" style="left:1498.500px;top:148.400px">修改</div><div class="abs lnk" style="left:1542.300px;top:148.400px;color:#f56c6c">删除</div>
  <div class="abs lnk" style="left:1424px;top:193.900px">生成任务</div><div class="abs lnk" style="left:1498.500px;top:193.900px">修改</div><div class="abs lnk" style="left:1542.300px;top:193.900px;color:#f56c6c">删除</div>
  <div class="abs" style="left:1489.500px;top:262.400px;line-height:38.600px;font-size:15.400px;color:#606266">前往</div>
  <div class="abs" style="left:1529.300px;top:262.400px;width:61.600px;height:35px;border:1px solid #dcdfe6;border-radius:4.400px;text-align:center;line-height:34.600px;font-size:15.400px;color:#606266">1</div>
  <div class="abs" style="left:1599.800px;top:262.400px;line-height:38.600px;font-size:15.400px;color:#606266">页</div>
</div>
<div class="abs" style="left:1859px;top:433.500px;width:44px;height:44.200px;background:#409eff;border-radius:6.600px 0 0 6.600px">
  <svg class="abs" style="left:12.500px;top:12.600px" width="19" height="19" viewBox="0 0 19 19"><g fill="none" stroke="#fff" stroke-width="1.250" stroke-linejoin="round"><circle cx="9.500" cy="9.500" r="2.900"/><path d="M7.700 1.600h3.600l.6 2.200 1.500.9 2.200-.6 1.800 3.100-1.600 1.600v1.400l1.600 1.600-1.800 3.100-2.200-.6-1.500.9-.6 2.200H7.700l-.6-2.200-1.500-.9-2.200.6-1.800-3.100 1.600-1.600V8.800L1.600 7.200l1.800-3.100 2.200.6 1.500-.9z"/></g></svg>
</div>
</div>
</div>
<div id="ovl"></div>
<div id="dlg">
  <div id="dlgh"><div class="t">修改生产订单</div><svg class="abs" style="left:1456.8px;top:14.5px" width="18" height="18" viewBox="0 0 18 18"><rect x="1.100" y="1.100" width="15.600" height="15.600" rx="1.600" fill="none" stroke="#606266" stroke-width="1.250"/></svg><div class="abs" style="left:1481.3px;top:8.7px"><svg viewBox="0 0 1024 1024" width="27.6" height="27.6" style=""><path fill="#5a5c61" d="M764.288 214.592 512 466.88 259.712 214.592a31.936 31.936 0 0 0-45.12 45.12L466.752 512 214.528 764.224a31.936 31.936 0 1 0 45.12 45.184L512 557.184l252.288 252.288a31.936 31.936 0 0 0 45.12-45.12L557.12 512.064l252.288-252.352a31.936 31.936 0 1 0-45.12-45.184z"/></svg></div></div>
  <div class="lbl" style="left:-65.2px;top:60.0px;width:200px"><span class="star">*</span>编号(MO开头)</div><div class="inp" style="left:148.0px;top:60.0px;width:364.9px"><span class="v"><span class="lat">MO24050802</span></span></div><div class="lbl" style="left:431.4px;top:60.0px;width:200px">订单名称</div><div class="inp" style="left:644.6px;top:60.0px;width:364.9px"><span class="v">测试订单<span class="lat">050802</span></span></div><div class="lbl" style="left:-65.2px;top:115.0px;width:200px"><span class="star">*</span>来源类型</div><div class="radio on" style="left:161.2px;top:124.9px"></div><div class="rtx" style="left:185.4px;top:115.0px;color:#409eff">客户订单</div><div class="radio" style="left:282.2px;top:124.9px"></div><div class="rtx" style="left:306.4px;top:115.0px">库存备货</div><div class="lbl" style="left:431.4px;top:115.0px;width:200px"><span class="star">*</span>产品编号</div><div class="inp" style="left:644.6px;top:115.0px;width:307.7px;border-radius:4.400px 0 0 4.400px"><span class="v"><span class="lat">MAT2023101213</span></span></div><div class="app" style="left:951.3px;top:115.0px;width:58.200px"><div class="abs" style="left:17.400px;top:8.400px"><svg viewBox="0 0 1024 1024" width="22.5" height="22.5" style=""><path fill="#8c8f95" d="M832 384H576V128H192v768h640zm-26.496-64L640 154.496V320zM160 64h480l256 256v608a32 32 0 0 1-32 32H160a32 32 0 0 1-32-32V96a32 32 0 0 1 32-32m320 512V448h64v128h128v64H544v128h-64V640H352v-64z"/></svg></div></div><div class="lbl" style="left:927.9px;top:115.0px;width:200px"><span class="star">*</span>产品名称</div><div class="inp" style="left:1141.1px;top:115.0px;width:364.9px"><span class="v">五金件<span class="lat">|1UEW/1801|111</span></span></div><div class="lbl" style="left:-65.2px;top:170.0px;width:200px">规格型号</div><div class="inp foc" style="left:148.0px;top:170.0px;width:364.9px"><span class="cur"></span><span class="ph">请输入规格型号</span></div><div class="lbl" style="left:431.4px;top:170.0px;width:200px"><span class="star">*</span>单位</div><div class="inp" style="left:644.6px;top:170.0px;width:364.9px"><span class="v"><span class="lat">kg</span></span></div><div class="lbl" style="left:927.9px;top:170.0px;width:200px"><span class="star">*</span>订单数量</div><div class="inp" style="left:1141.1px;top:170.0px;width:165px"><span class="v" style="left:0;right:0;text-align:center">11</span></div><div class="nbtn" style="left:1142.1px;top:171.0px;border-radius:4.400px 0 0 4.400px;border-right:1px solid #dcdfe6"><div class="abs" style="left:10.500px;top:10.500px"><svg viewBox="0 0 1024 1024" width="13.5" height="13.5" style=""><path fill="#606266" d="M128 544h768a32 32 0 1 0 0-64H128a32 32 0 0 0 0 64"/></svg></div></div><div class="nbtn" style="left:1269.9px;top:171.0px;border-radius:0 4.400px 4.400px 0;border-left:1px solid #dcdfe6"><div class="abs" style="left:10px;top:10.500px"><svg viewBox="0 0 1024 1024" width="13.5" height="13.5" style=""><path fill="#606266" d="M480 480V128a32 32 0 0 1 64 0v352h352a32 32 0 1 1 0 64H544v352a32 32 0 1 1-64 0V544H128a32 32 0 0 1 0-64z"/></svg></div></div><div class="lbl" style="left:-65.2px;top:225.0px;width:200px"><span class="star">*</span>预计生产日期</div><div class="inp" style="left:148.0px;top:225.0px;width:242px"><span class="dic"><svg viewBox="0 0 1024 1024" width="15.4" height="15.4" style=""><path fill="#a8abb2" d="M128 384v512h768V192H768v32a32 32 0 1 1-64 0v-32H320v32a32 32 0 0 1-64 0v-32H128v128h768v64zm192-256h384V96a32 32 0 1 1 64 0v32h160a32 32 0 0 1 32 32v768a32 32 0 0 1-32 32H96a32 32 0 0 1-32-32V160a32 32 0 0 1 32-32h160V96a32 32 0 0 1 64 0zm-32 384h64a32 32 0 0 1 0 64h-64a32 32 0 0 1 0-64m0 192h64a32 32 0 1 1 0 64h-64a32 32 0 1 1 0-64m192-192h64a32 32 0 0 1 0 64h-64a32 32 0 0 1 0-64m0 192h64a32 32 0 1 1 0 64h-64a32 32 0 1 1 0-64m192-192h64a32 32 0 1 1 0 64h-64a32 32 0 1 1 0-64m0 192h64a32 32 0 1 1 0 64h-64a32 32 0 1 1 0-64"/></svg></span><span class="v" style="left:35.200px">2024-05-07</span></div><div class="lbl" style="left:431.4px;top:225.0px;width:200px"><span class="star">*</span>预计结束日期</div><div class="inp" style="left:644.6px;top:225.0px;width:242px"><span class="dic"><svg viewBox="0 0 1024 1024" width="15.4" height="15.4" style=""><path fill="#a8abb2" d="M128 384v512h768V192H768v32a32 32 0 1 1-64 0v-32H320v32a32 32 0 0 1-64 0v-32H128v128h768v64zm192-256h384V96a32 32 0 1 1 64 0v32h160a32 32 0 0 1 32 32v768a32 32 0 0 1-32 32H96a32 32 0 0 1-32-32V160a32 32 0 0 1 32-32h160V96a32 32 0 0 1 64 0zm-32 384h64a32 32 0 0 1 0 64h-64a32 32 0 0 1 0-64m0 192h64a32 32 0 1 1 0 64h-64a32 32 0 1 1 0-64m192-192h64a32 32 0 0 1 0 64h-64a32 32 0 0 1 0-64m0 192h64a32 32 0 1 1 0 64h-64a32 32 0 1 1 0-64m192-192h64a32 32 0 1 1 0 64h-64a32 32 0 1 1 0-64m0 192h64a32 32 0 1 1 0 64h-64a32 32 0 1 1 0-64"/></svg></span><span class="v" style="left:35.200px">2024-05-08</span></div><div class="lbl" style="left:927.9px;top:225.0px;width:200px"><span class="star">*</span>订购日期</div><div class="inp" style="left:1141.1px;top:225.0px;width:242px"><span class="dic"><svg viewBox="0 0 1024 1024" width="15.4" height="15.4" style=""><path fill="#a8abb2" d="M128 384v512h768V192H768v32a32 32 0 1 1-64 0v-32H320v32a32 32 0 0 1-64 0v-32H128v128h768v64zm192-256h384V96a32 32 0 1 1 64 0v32h160a32 32 0 0 1 32 32v768a32 32 0 0 1-32 32H96a32 32 0 0 1-32-32V160a32 32 0 0 1 32-32h160V96a32 32 0 0 1 64 0zm-32 384h64a32 32 0 0 1 0 64h-64a32 32 0 0 1 0-64m0 192h64a32 32 0 1 1 0 64h-64a32 32 0 1 1 0-64m192-192h64a32 32 0 0 1 0 64h-64a32 32 0 0 1 0-64m0 192h64a32 32 0 1 1 0 64h-64a32 32 0 1 1 0-64m192-192h64a32 32 0 1 1 0 64h-64a32 32 0 1 1 0-64m0 192h64a32 32 0 1 1 0 64h-64a32 32 0 1 1 0-64"/></svg></span><span class="v" style="left:35.200px">2024-05-08</span></div><div class="lbl" style="left:-65.2px;top:280.0px;width:200px">批次号</div><div class="inp" style="left:148.0px;top:280.0px;width:364.9px"><span class="v"><span class="lat">1</span></span></div><div class="lbl" style="left:431.4px;top:280.0px;width:200px">客户编码</div><div class="inp" style="left:644.6px;top:280.0px;width:307.7px;border-radius:4.400px 0 0 4.400px"><span class="ph">请输入客户编码</span></div><div class="app" style="left:951.3px;top:280.0px;width:58.200px"><div class="abs" style="left:17.400px;top:8.400px"><svg viewBox="0 0 1024 1024" width="22.5" height="22.5" style=""><path fill="#8c8f95" d="M832 384H576V128H192v768h640zm-26.496-64L640 154.496V320zM160 64h480l256 256v608a32 32 0 0 1-32 32H160a32 32 0 0 1-32-32V96a32 32 0 0 1 32-32m320 512V448h64v128h128v64H544v128h-64V640H352v-64z"/></svg></div></div><div class="lbl" style="left:927.9px;top:280.0px;width:200px">客户名称</div><div class="inp" style="left:1141.1px;top:280.0px;width:364.9px"><span class="ph">请输入客户名称</span></div><div class="lbl" style="left:-65.2px;top:335.0px;width:200px">备注</div><div class="inp" style="left:148.0px;top:335.0px;width:364.9px;height:33px"><span class="ph" style="line-height:31.600px">请输入内容</span><svg class="abs" style="right:1px;bottom:1px" width="10" height="10" viewBox="0 0 10 10"><path d="M9.500 1.500l-8 8M9.500 5.500l-4 4" stroke="#5a5a5a" stroke-width="1" fill="none"/></svg></div><div class="tabs" style="left:16.4px;top:390.0px;width:1489.4px;height:220.6px"><div class="tabh"></div><div class="tabi">BOM组成</div><div class="tbl" style="left:16.800px;top:59.400px;width:1454.2px"><div class="th" style="left:0.0px;width:242.2px">BOM物料编号</div><div class="td" style="left:0.0px;width:242.2px"><span class="lat">MAT2023101310</span></div><div class="th" style="left:242.2px;width:242.2px">BOM物料名称</div><div class="td" style="left:242.2px;width:242.2px">五金件<span class="lat">|1UEW/155|111</span></div><div class="th" style="left:484.4px;width:242.2px">规格型号</div><div class="td" style="left:484.4px;width:242.2px"><span class="lat">--</span></div><div class="th" style="left:726.6px;width:242.2px">单位</div><div class="td" style="left:726.6px;width:242.2px"><span class="lat">3</span></div><div class="th" style="left:968.8px;width:242.2px">物料/产品</div><div class="td" style="left:968.8px;width:242.2px">物料</div><div class="th" style="left:1211.0px;width:242.2px">预计使用量</div><div class="td" style="left:1211.0px;width:242.2px"><span class="lat">11</span></div></div><div class="ptx" style="left:998.1px;top:167.2px">共 1 条</div><div class="inp" style="left:1063.6px;top:167.2px;width:140.800px;height:36px"><span class="v" style="left:0;width:117px;text-align:center;top:2px">10条/页</span><div class="abs" style="right:11.300px;top:10px"><svg viewBox="0 0 1024 1024" width="15" height="15" style=""><path fill="#a8abb2" d="M831.872 340.864 512 652.672 192.128 340.864a30.592 30.592 0 0 0-42.752 0 29.12 29.12 0 0 0 0 41.6L489.664 714.24a32 32 0 0 0 44.672 0l340.288-331.712a29.12 29.12 0 0 0 0-41.728 30.592 30.592 0 0 0-42.752 0z"/></svg></div></div><div class="abs" style="left:1234.6px;top:178.5px"><svg viewBox="0 0 1024 1024" width="13" height="13" style=""><path fill="#a8abb2" d="M609.408 149.376 277.76 489.6a32 32 0 0 0 0 44.672l331.648 340.352a29.12 29.12 0 0 0 41.728 0 30.592 30.592 0 0 0 0-42.752L339.264 511.936l311.872-319.872a30.592 30.592 0 0 0 0-42.688 29.12 29.12 0 0 0-41.728 0z"/></svg></div><div class="ptx" style="left:1259.3px;top:167.2px;width:30px;text-align:center;color:#409eff;font-weight:bold">1</div><div class="abs" style="left:1303.4px;top:178.5px"><svg viewBox="0 0 1024 1024" width="13" height="13" style=""><path fill="#a8abb2" d="M340.864 149.312a30.592 30.592 0 0 0 0 42.752L652.736 512 340.864 831.872a30.592 30.592 0 0 0 0 42.752 29.12 29.12 0 0 0 41.728 0L714.24 534.336a32 32 0 0 0 0-44.672L382.592 149.376a29.12 29.12 0 0 0-41.728 0z"/></svg></div><div class="ptx" style="left:1345.3px;top:167.2px">前往</div><div class="inp" style="left:1384.6px;top:167.2px;width:61.600px;height:36px"><span class="v" style="left:0;right:0;text-align:center;top:2px">1</span></div><div class="ptx" style="left:1454.8px;top:167.2px">页</div></div><div class="btn pri" style="left:1367.0px;top:721.0px">确定</div><div class="btn" style="left:1440.4px;top:721.0px">取消</div>
</div>
<div id="sb"><div class="up"></div><div class="th"></div></div>
</body>
</html>
